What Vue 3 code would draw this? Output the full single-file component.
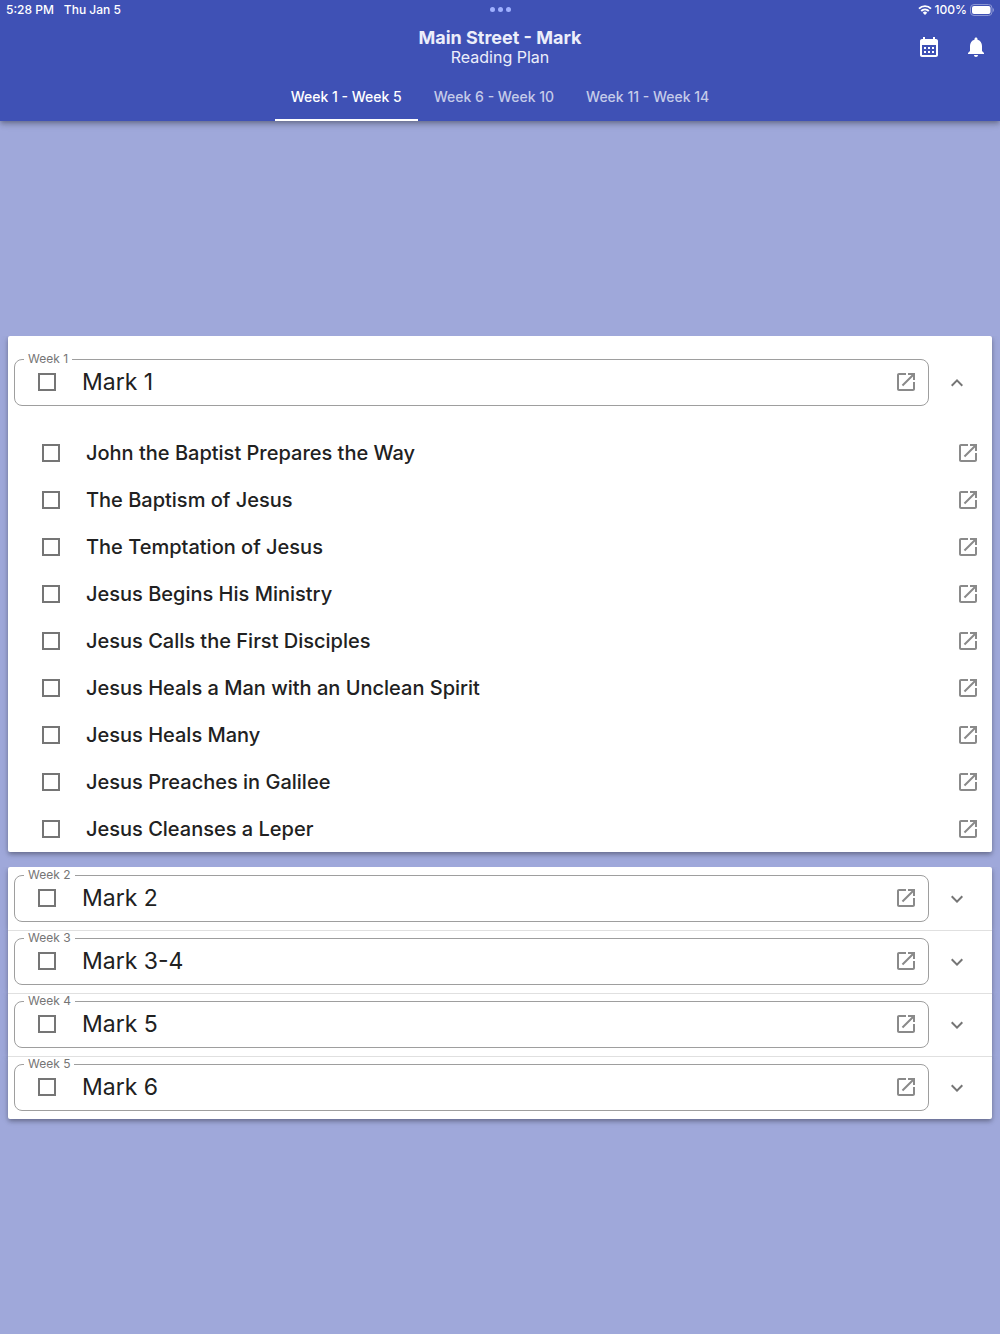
<script setup>
import { reactive, ref } from 'vue'

const tabs = ['Week 1 - Week 5', 'Week 6 - Week 10', 'Week 11 - Week 14']
const activeTab = ref(0)

const weeks = reactive([
  {
    week: 'Week 1', title: 'Mark 1', open: true,
    passages: [
      'John the Baptist Prepares the Way',
      'The Baptism of Jesus',
      'The Temptation of Jesus',
      'Jesus Begins His Ministry',
      'Jesus Calls the First Disciples',
      'Jesus Heals a Man with an Unclean Spirit',
      'Jesus Heals Many',
      'Jesus Preaches in Galilee',
      'Jesus Cleanses a Leper'
    ]
  },
  { week: 'Week 2', title: 'Mark 2', open: false, passages: [] },
  { week: 'Week 3', title: 'Mark 3-4', open: false, passages: [] },
  { week: 'Week 4', title: 'Mark 5', open: false, passages: [] },
  { week: 'Week 5', title: 'Mark 6', open: false, passages: [] }
])

const openIcon = 'M19 19H5V5h7V3H5c-1.11 0-2 .9-2 2v14c0 1.1.89 2 2 2h14c1.1 0 2-.9 2-2v-7h-2v7zM14 3v2h3.59l-9.83 9.83 1.41 1.41L19 6.41V10h2V3h-7z'
</script>

<template>
  <div class="page">
    <header class="app-bar">
      <div class="status">
        <div class="status-side"><span>5:28 PM</span><span>Thu Jan 5</span></div>
        <div class="dots"><i></i><i></i><i></i></div>
        <div class="status-side status-right">
          <svg width="14" height="10" viewBox="0 0 14 10" fill="none" stroke="#fff" stroke-width="1.9">
            <path d="M1 3.6a8.6 8.6 0 0 1 12 0M3.2 6a5.5 5.5 0 0 1 7.6 0" />
            <path d="M7 10 4.8 7.8a3 3 0 0 1 4.4 0z" fill="#fff" stroke="none" />
          </svg>
          <span>100%</span>
          <svg width="24" height="12" viewBox="0 0 24 12">
            <rect x="0.5" y="0.5" width="21.5" height="11" rx="3.5" fill="none" stroke="#8c97d3" />
            <rect x="2" y="2" width="18.5" height="8" rx="2" fill="#fff" />
            <path d="M22.8 4v4c1.5-.6 1.5-3.4 0-4z" fill="#8c97d3" />
          </svg>
        </div>
      </div>
      <div class="toolbar">
        <div class="heading">
          <h1>Main Street - Mark</h1>
          <p>Reading Plan</p>
        </div>
        <div class="actions">
          <button type="button" aria-label="Calendar">
            <svg width="24" height="24" viewBox="0 0 24 24" fill="#fff"><path d="M19 4h-1V2h-2v2H8V2H6v2H5c-1.11 0-1.99.9-1.99 2L3 20c0 1.1.89 2 2 2h14c1.1 0 2-.9 2-2V6c0-1.1-.9-2-2-2zm0 16H5V10h14v10zM9 14H7v-2h2v2zm4 0h-2v-2h2v2zm4 0h-2v-2h2v2zm-8 4H7v-2h2v2zm4 0h-2v-2h2v2zm4 0h-2v-2h2v2z" /></svg>
          </button>
          <button type="button" aria-label="Notifications">
            <svg width="24" height="24" viewBox="0 0 24 24" fill="#fff"><path d="M12 22c1.1 0 2-.9 2-2h-4c0 1.1.89 2 2 2zm6-6v-5c0-3.07-1.64-5.64-4.5-6.32V4c0-.83-.67-1.5-1.5-1.5s-1.5.67-1.5 1.5v.68C7.63 5.36 6 7.92 6 11v5l-2 2v1h16v-1l-2-2z" /></svg>
          </button>
        </div>
      </div>
      <nav class="tabs">
        <button v-for="(tab, i) in tabs" :key="tab" type="button" :class="{ active: i === activeTab }" @click="activeTab = i">{{ tab }}</button>
      </nav>
    </header>

    <main class="plan">
      <section v-for="w in weeks" :key="w.week" class="panel" :class="{ open: w.open }">
        <div class="summary">
          <fieldset>
            <legend>{{ w.week }}</legend>
            <div class="chapter">
              <label><input type="checkbox" /><span>{{ w.title }}</span></label>
              <button type="button" :aria-label="'Open ' + w.title">
                <svg width="24" height="24" viewBox="0 0 24 24" fill="#8a8a8a"><path :d="openIcon" /></svg>
              </button>
            </div>
          </fieldset>
          <button type="button" class="toggle" :aria-expanded="w.open" :aria-label="'Toggle ' + w.week" @click="w.open = !w.open">
            <svg width="24" height="24" viewBox="0 0 24 24" fill="#757575"><path d="M16.59 8.59 12 13.17 7.41 8.59 6 10l6 6 6-6z" /></svg>
          </button>
        </div>
        <ul v-if="w.open" class="passages">
          <li v-for="p in w.passages" :key="p">
            <label><input type="checkbox" /><span>{{ p }}</span></label>
            <button type="button" :aria-label="'Open ' + p">
              <svg width="24" height="24" viewBox="0 0 24 24" fill="#8a8a8a"><path :d="openIcon" /></svg>
            </button>
          </li>
        </ul>
      </section>
    </main>
  </div>
</template>

<style>
body {
  margin: 0;
  background: #9fa8da;
}
</style>

<style scoped>
.page {
  min-height: 100vh;
  display: flex;
  flex-direction: column;
  background: #9fa8da;
  color: #212121;
  font-family: Inter, Roboto, sans-serif;
}
button {
  padding: 0;
  border: 0;
  background: none;
  font: inherit;
  color: inherit;
  cursor: pointer;
}
svg {
  display: block;
}
.app-bar {
  background: #3f51b5;
  color: #fff;
  box-shadow: 0 2px 4px -1px rgba(0, 0, 0, 0.2), 0 4px 5px rgba(0, 0, 0, 0.14), 0 1px 10px rgba(0, 0, 0, 0.12);
}
.status {
  display: flex;
  align-items: center;
  height: 19px;
  padding: 0 6px;
  font-size: 12px;
  font-weight: 500;
}
.status-side {
  flex: 1;
  display: flex;
  align-items: center;
  gap: 10px;
}
.status-right {
  justify-content: flex-end;
  gap: 3px;
}
.dots {
  display: flex;
  gap: 3px;
}
.dots i {
  width: 5px;
  height: 5px;
  border-radius: 50%;
  background: #9fb0ff;
}
.toolbar {
  display: grid;
  grid-template-columns: 1fr auto 1fr;
  align-items: center;
  height: 56px;
  padding: 0 12px;
}
.heading {
  grid-column: 2;
  text-align: center;
  color: #eceefa;
}
h1 {
  margin: 0;
  font-size: 18px;
  line-height: 20px;
  font-weight: 700;
}
p {
  margin: 0;
  font-size: 16px;
  line-height: 18px;
}
.actions {
  display: flex;
  justify-content: flex-end;
  gap: 23px;
}
.tabs {
  display: flex;
  justify-content: center;
  padding: 0 16px;
}
.tabs button {
  height: 46px;
  padding: 0 16px 2px;
  border-bottom: 2px solid transparent;
  font-size: 14px;
  font-weight: 500;
  color: #c5cbe9;
}
.tabs .active {
  color: #fff;
  border-bottom-color: #fff;
}
.plan {
  flex: 1;
  display: flex;
  flex-direction: column;
  justify-content: center;
  padding: 0 8px;
}
.panel {
  background: #fff;
  box-shadow: 0 2px 4px -1px rgba(0, 0, 0, 0.2), 0 3px 4px rgba(0, 0, 0, 0.14), 0 1px 8px rgba(0, 0, 0, 0.12);
  clip-path: inset(0 -12px -12px);
}
.panel:not(.open) + .panel:not(.open) .summary {
  box-shadow: inset 0 1px #e0e0e0;
}
.panel:first-child,
.open,
.open + .panel {
  border-top-left-radius: 2px;
  border-top-right-radius: 2px;
}
.panel:last-child,
.open {
  border-bottom-left-radius: 2px;
  border-bottom-right-radius: 2px;
}
.open + .panel {
  margin-top: 15px;
}
.summary {
  display: flex;
  align-items: center;
  height: 63px;
  padding: 0 23px 0 6px;
}
.open .summary {
  height: 93px;
}
fieldset {
  flex: 1;
  min-width: 0;
  box-sizing: border-box;
  height: 54px;
  margin: 0 16px 7px 0;
  padding: 0 10px 0 9px;
  border: 1px solid #9e9e9e;
  border-radius: 8px;
}
legend {
  padding: 0 4px;
  font-size: 12px;
  line-height: 14px;
  color: #757575;
}
.chapter {
  display: flex;
  align-items: center;
  height: 45px;
  margin-top: -7px;
  font-size: 23px;
}
label {
  flex: 1;
  display: flex;
  align-items: center;
  gap: 26px;
}
input {
  appearance: none;
  width: 18px;
  height: 18px;
  margin: 0;
  border: 2px solid #757575;
}
input:checked {
  background: #3f51b5;
}
.chapter label {
  padding-left: 14px;
}
.open .toggle svg {
  transform: rotate(180deg);
}
.passages {
  margin: 0;
  padding: 0 12px 0 34px;
  list-style: none;
}
.passages li {
  display: flex;
  align-items: center;
  height: 47px;
  font-size: 20px;
  font-weight: 500;
}
</style>
